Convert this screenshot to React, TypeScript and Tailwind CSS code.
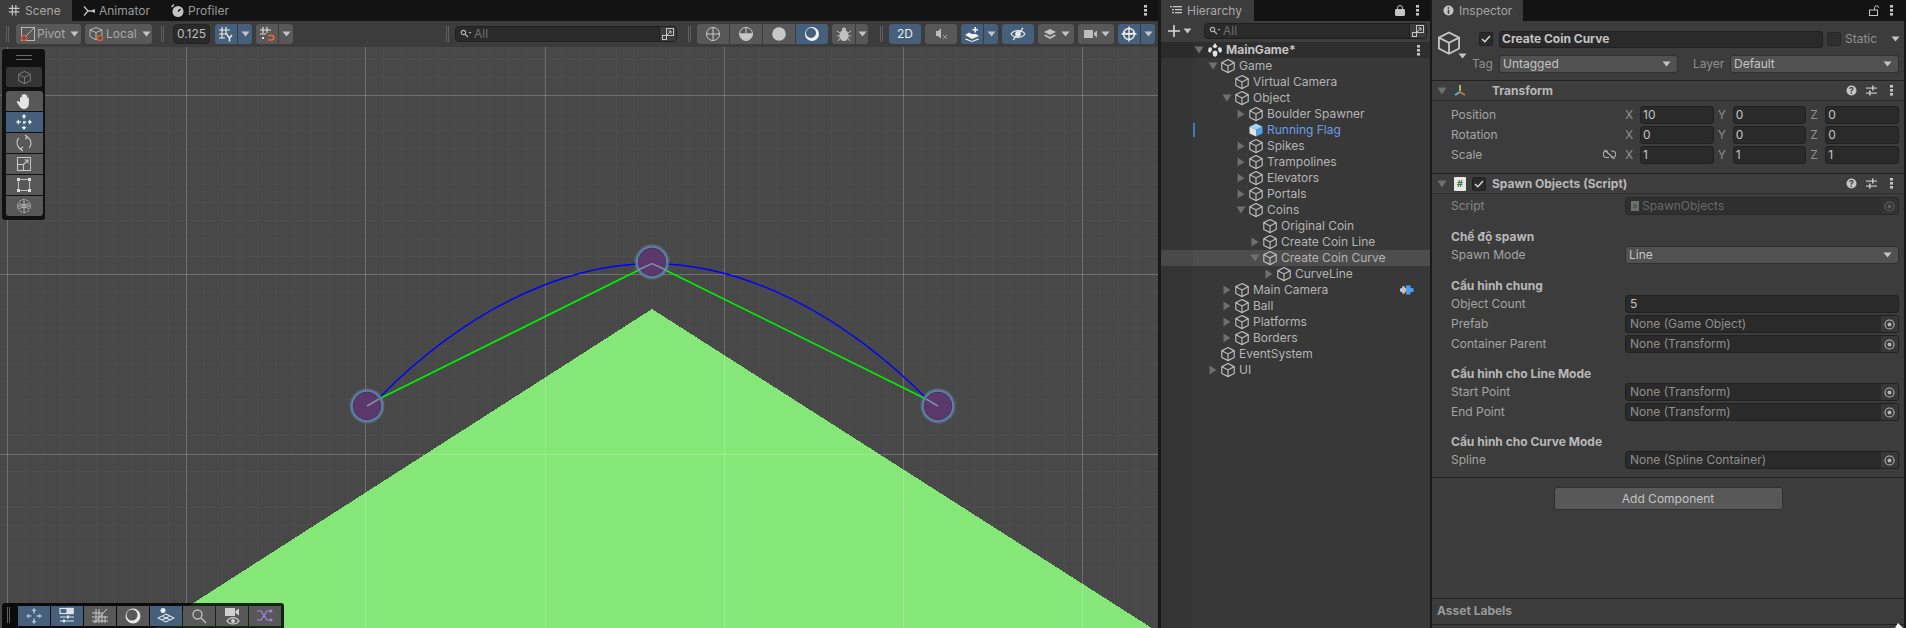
import React from "react";

const S = (p: React.SVGProps<SVGSVGElement> & { s?: number }) => {
  const { s = 16, children, ...r } = p;
  return (
    <svg width={s} height={s} viewBox="0 0 16 16" fill="none" stroke="currentColor" strokeWidth={1} className="shrink-0" {...r}>
      {children}
    </svg>
  );
};

const Cube = ({ c = "#c4c4c4", s = 16 }: { c?: string; s?: number }) => (
  <svg width={s} height={s} viewBox="0 0 16 16" fill="none" stroke={c} strokeWidth={1.1} className="shrink-0">
    <path d="M8 1.5 14.2 4.7V11.4L8 14.6 1.8 11.4V4.7Z" />
    <path d="M1.8 4.7 8 7.9 14.2 4.7M8 7.9V14.6" />
  </svg>
);

const Caret = ({ c = "#c4c4c4" }: { c?: string }) => (
  <svg width="9" height="6" viewBox="0 0 9 6" className="shrink-0"><path d="M0.5 0.5H8.5L4.5 5.5Z" fill={c} /></svg>
);

const Kebab = ({ c = "#c4c4c4" }: { c?: string }) => (
  <svg width="3" height="11" viewBox="0 0 3 11" className="shrink-0"><g fill={c}><rect x="0" y="0" width="3" height="2.6" /><rect x="0" y="4" width="3" height="2.6" /><rect x="0" y="8" width="3" height="2.6" /></g></svg>
);

const Grip = () => (
  <div className="flex gap-px h-[16px] shrink-0">
    <div className="w-px bg-[#5e5e5e]" />
    <div className="w-px bg-[#5e5e5e]" />
  </div>
);

const GridIcon = () => (
  <S s={14}><path d="M5 1V13M9 1V13M1 5H13M1 9H13" stroke="#c8c8c8" strokeWidth={1.3} /></S>
);

const Btn = ({ w, active, children, className = "" }: { w: number; active?: boolean; children?: React.ReactNode; className?: string }) => (
  <div style={{ width: w }} className={`h-[20px] flex items-center justify-center shrink-0 ${active ? "bg-[#46607c]" : "bg-[#585858]"} ${className}`}>
    {children}
  </div>
);

const Split = ({ w, sw = 14, active, children, className = "" }: { w: number; sw?: number; active?: boolean; children?: React.ReactNode; className?: string }) => (
  <div className={`flex shrink-0 rounded-[3px] overflow-hidden gap-px bg-[#3c3c3c] ${className}`}>
    <Btn w={w} active={active}>{children}</Btn>
    <Btn w={sw} active={active}><Caret /></Btn>
  </div>
);

const SearchGlass = () => (
  <svg width="12" height="10" viewBox="0 0 12 10" className="shrink-0" fill="none" stroke="#b0b0b0" strokeWidth={1.2}>
    <circle cx="3.5" cy="3.5" r="2.2" />
    <path d="M5 5 8 8" />
    <path d="M8.5 3H11.5L10 4.8Z" fill="#b0b0b0" stroke="none" />
  </svg>
);

const SearchBtnIcon = () => (
  <svg width="14" height="14" viewBox="0 0 14 14" fill="none" stroke="#c4c4c4" strokeWidth={1}>
    <rect x="5.5" y="1.5" width="7" height="7" />
    <rect x="1.5" y="8.5" width="4" height="4" />
    <path d="M6 8 10 4M7.5 4H10V6.5" />
  </svg>
);

const Search = ({ w, h = 16 }: { w: number; h?: number }) => (
  <div style={{ width: w, height: h }} className="flex items-center bg-[#2a2a2a] border border-[#1f1f1f] rounded-[4px] shrink-0 overflow-hidden">
    <div className="flex-1 flex items-center pl-[4px] gap-[2px]">
      <SearchGlass />
      <span className="text-[#6f6f6f] text-[12px] leading-none">All</span>
    </div>
    <div className="w-[17px] h-full flex items-center justify-center bg-[#3c3c3c] border-l border-[#1f1f1f]"><SearchBtnIcon /></div>
  </div>
);

function Tabs({ children, right, rightGap = "pr-[11px]" }: { children: React.ReactNode; right: React.ReactNode; rightGap?: string }) {
  return (
    <div className={`h-[21px] bg-[#131313] flex items-stretch justify-between shrink-0 ${rightGap}`}>
      <div className="flex items-stretch">{children}</div>
      <div className="flex items-center gap-[11px]">{right}</div>
    </div>
  );
}

function SceneToolbar() {
  return (
    <div className="h-[26px] bg-[#3c3c3c] flex items-center shrink-0 pl-[6px] pb-[0px]">
      <Grip />
      <div className="ml-[7px] w-[65px] h-[20px] rounded-[3px] bg-[#585858] flex items-center pl-[4px] gap-[1px] text-[#a9a9a9]">
        <svg width="16" height="16" viewBox="0 0 16 16" fill="none" className="shrink-0">
          <rect x="1.5" y="1.5" width="13" height="13" stroke="#b8b8b8" />
          <path d="M4 12 14 2" stroke="#b8b8b8" />
          <circle cx="4" cy="12" r="2.6" stroke="#e8582a" strokeWidth={1.3} fill="#585858" />
        </svg>
        <span className="text-[12px]">Pivot</span>
        <span className="ml-[4px]"><Caret /></span>
      </div>
      <div className="ml-[4px] w-[67px] h-[20px] rounded-[3px] bg-[#585858] flex items-center pl-[4px] gap-[1px] text-[#a9a9a9]">
        <svg width="16" height="16" viewBox="0 0 16 16" fill="none" className="shrink-0">
          <path d="M7 1.5 13 4V9.5L7 14 1 10.5V4ZM1 4 7 6.5 13 4M7 6.5V14" stroke="#b8b8b8" />
          <circle cx="11" cy="12" r="2.6" stroke="#e8582a" strokeWidth={1.3} fill="#585858" />
        </svg>
        <span className="text-[12px]">Local</span>
        <span className="ml-[4px]"><Caret /></span>
      </div>
      <div className="ml-[9px]"><Grip /></div>
      <div className="ml-[9px] w-[37px] h-[20px] rounded-[4px] bg-[#2a2a2a] border border-[#232323] flex items-center justify-center text-[#bdbdbd] text-[12px]">0.125</div>
      <Split w={22} sw={14} active className="ml-[5px]">
        <svg width="16" height="16" viewBox="0 0 16 16" fill="none" stroke="#e8e8e8" strokeWidth={1.2}><path d="M4 1V12M8 1V9M1 4H12M1 8H10M1 12H7" /><path d="M9 9 11.5 12 14 9M11.5 12V15.5" strokeWidth={1.6} /></svg>
      </Split>
      <Split w={22} sw={14} className="ml-[4px]">
        <svg width="16" height="16" viewBox="0 0 16 16" fill="none" stroke="#e0e0e0" strokeWidth={1.2}><path d="M4 1V7M8 1V7M1 4H12M1 8H7" /><rect x="3" y="11" width="2" height="2" fill="#e0e0e0" stroke="none" /><path d="M9 9.5H12.5A2 2 0 0 1 12.5 14H9" stroke="#f26a2e" strokeWidth={1.6} /></svg>
      </Split>
      <div className="ml-[153px]"><Grip /></div>
      <div className="ml-[6px]"><Search w={222} /></div>
      <div className="ml-[11px]"><Grip /></div>
      <div className="ml-[6px] flex rounded-[3px] overflow-hidden gap-px">
        <Btn w={32}><svg width="16" height="16" viewBox="0 0 16 16" fill="none" stroke="#c8c8c8"><circle cx="8" cy="8" r="6.5" /><path d="M8 1.5V14.5M1.5 8H14.5" /></svg></Btn>
        <Btn w={32}><svg width="16" height="16" viewBox="0 0 16 16" fill="none" stroke="#c8c8c8"><circle cx="8" cy="8" r="6.5" /><path d="M8 1.5V8M1.5 8H14.5" /><path d="M2 8A6 6 0 0 0 14 8Z" fill="#c8c8c8" /></svg></Btn>
        <Btn w={32}><svg width="16" height="16" viewBox="0 0 16 16"><circle cx="8" cy="8" r="6.8" fill="#c8c8c8" /></svg></Btn>
        <Btn w={32} active><svg width="16" height="16" viewBox="0 0 16 16"><circle cx="8" cy="8" r="7" fill="#f0f0f0" /><circle cx="7" cy="7" r="5" fill="#46607c" /></svg></Btn>
      </div>
      <Split w={23} sw={12} className="ml-[4px]">
        <svg width="16" height="16" viewBox="0 0 16 16" fill="#c0c0c0"><ellipse cx="8" cy="9.5" rx="4.5" ry="5.5" /><circle cx="8" cy="3.5" r="2" /><path d="M1 5 4 7M15 5 12 7M1 10H4M15 10H12M2 15 4 12M14 15 12 12" stroke="#c0c0c0" /></svg>
      </Split>
      <div className="ml-[12px]"><Grip /></div>
      <Btn w={32} active className="ml-[6px] rounded-[3px]"><span className="text-[#eaeaea] text-[12px]">2D</span></Btn>
      <Btn w={32} className="ml-[4px] rounded-[3px]">
        <svg width="16" height="16" viewBox="0 0 16 16"><path d="M3 5H5L8 2.5V12.5L5 10H3Z" fill="#bdbdbd" /><path d="M10 9 14 13M14 9 10 13" stroke="#9a9a9a" /></svg>
      </Btn>
      <Split w={22} sw={14} active className="ml-[4px]">
        <svg width="16" height="16" viewBox="0 0 16 16" fill="#f0f0f0"><path d="M1 9 5 6.5 8 8 12 8 15 10 8 13Z" /><path d="M2 12.5 8 15 14 12.5 15 13.5 8 16 1 13.5Z" /><path d="M10.5 1H12V3H14V4.5H12V6.5H10.5V4.5H8.5V3H10.5Z" /></svg>
      </Split>
      <Btn w={32} active className="ml-[4px] rounded-[3px]">
        <svg width="16" height="16" viewBox="0 0 16 16" fill="none" stroke="#e8e8e8" strokeWidth={1.2}><path d="M1 8C4 3.5 12 3.5 15 8 12 12.5 4 12.5 1 8Z" /><circle cx="8" cy="8" r="2.3" fill="#e8e8e8" /><path d="M3 14 13 2" /></svg>
      </Btn>
      <div className="ml-[4px] w-[36px] h-[20px] rounded-[3px] bg-[#585858] flex items-center justify-center gap-[4px]">
        <svg width="14" height="14" viewBox="0 0 14 14" fill="#c4c4c4"><path d="M7 2 13 5 7 8 1 5Z" /><path d="M2.5 7.5 7 10 11.5 7.5 13 8.5 7 12 1 8.5Z" /></svg>
        <Caret />
      </div>
      <div className="ml-[4px] w-[36px] h-[20px] rounded-[3px] bg-[#585858] flex items-center justify-center gap-[3px]">
        <svg width="15" height="14" viewBox="0 0 15 14" fill="#bdbdbd"><rect x="1" y="3" width="9" height="8" /><path d="M11 6 14 3.5V10.5L11 8Z" /></svg>
        <Caret />
      </div>
      <Split w={22} sw={14} active className="ml-[4px]">
        <svg width="16" height="16" viewBox="0 0 16 16" fill="none" stroke="#f0f0f0" strokeWidth={1.4}><circle cx="8" cy="8" r="5.5" /><path d="M8 0.5V15.5M0.5 8H15.5" /><path d="M3 6.5C5 8 11 8 13 6.5" strokeWidth={1} /></svg>
      </Split>
    </div>
  );
}

const tools = [
  <svg key="h" width="18" height="18" viewBox="0 0 18 18" fill="#e4e4e4"><path d="M5 10V5.5a1 1 0 0 1 1.8 0V3a1 1 0 0 1 1.9 0V2.5a1 1 0 0 1 1.8 0V3.5a1 1 0 0 1 1.8 0V6a1 1 0 0 1 1.6 0V11c0 3.5-2 6-5 6-2.5 0-3.5-1.5-5-3.5L2 10.5a1 1 0 0 1 1.8-1Z" /></svg>,
  <svg key="m" width="18" height="18" viewBox="0 0 18 18" fill="none" stroke="#cfe0f0" strokeWidth={1.6}><path d="M9 3V15M3 9H15" strokeDasharray="3 2" /><path d="M9 1 11.5 4H6.5ZM9 17 6.5 14H11.5ZM1 9 4 6.5V11.5ZM17 9 14 11.5V6.5Z" fill="#e8f0f8" stroke="none" /></svg>,
  <svg key="r" width="18" height="18" viewBox="0 0 18 18" fill="none" stroke="#c4c4c4" strokeWidth={1.1}><path d="M11 2.5A7 7 0 0 1 14 14M7 15.5A7 7 0 0 1 4 4" /><path d="M10 1 13 3.5 10 5M8 13 5 15 8 17" /></svg>,
  <svg key="s" width="16" height="16" viewBox="0 0 16 16" fill="none" stroke="#c4c4c4" strokeWidth={1.1}><rect x="1.5" y="1.5" width="13" height="13" /><rect x="1.5" y="8.5" width="6" height="6" /><path d="M7 9 12 4M8.5 4H12V7.5" /></svg>,
  <svg key="t" width="16" height="16" viewBox="0 0 16 16" fill="none" stroke="#c4c4c4"><rect x="2.5" y="2.5" width="11" height="11" strokeDasharray="7 4" strokeDashoffset="9" /><g fill="#e0e0e0" stroke="none"><rect x="1" y="1" width="3" height="3" /><rect x="12" y="1" width="3" height="3" /><rect x="1" y="12" width="3" height="3" /><rect x="12" y="12" width="3" height="3" /></g></svg>,
  <svg key="a" width="18" height="18" viewBox="0 0 18 18" fill="none" stroke="#b4b4b4"><circle cx="9" cy="9" r="6.5" strokeDasharray="3 1" /><path d="M9 2V16M2 9H16M4 6.5C7 8 11 8 14 6.5M4 11.5C7 10 11 10 14 11.5" /></svg>,
];

function ToolPalette() {
  return (
    <div className="absolute left-[2px] top-[2px] w-[43px] h-[171px] bg-[#111111] rounded-[3px] flex flex-col items-center pt-[6px]">
      <div className="w-[16px] h-[5px] border-y border-[#6a6a6a] shrink-0" />
      <div className="mt-[7px] ml-px w-[36px] h-[20px] bg-[#353535] rounded-[2px] flex items-center justify-center shrink-0"><Cube c="#777777" s={15} /></div>
      <div className="mt-[4px] ml-px flex flex-col gap-px rounded-[3px] overflow-hidden">
        {tools.map((t, i) => (
          <div key={i} className={`w-[37px] h-[20px] flex items-center justify-center ${i === 1 ? "bg-[#46607c]" : "bg-[#585858]"}`}>{t}</div>
        ))}
      </div>
    </div>
  );
}

const overlays = [
  <svg key="1" width="18" height="18" viewBox="0 0 18 18" fill="none" stroke="#a9bccf" strokeWidth={1.6}><path d="M9 3.5V6.5M9 11.5V14.5M3.5 9H6.5M11.5 9H14.5" /><path d="M9 1 11.5 4H6.5ZM9 17 6.5 14H11.5ZM1 9 4 6.5V11.5ZM17 9 14 11.5V6.5Z" fill="#a9bccf" stroke="none" /></svg>,
  <svg key="2" width="18" height="18" viewBox="0 0 18 18" fill="none" stroke="#dce4ec" strokeWidth={1.2}><rect x="2" y="1.5" width="13" height="5" /><rect x="9" y="1.5" width="6" height="5" fill="#dce4ec" /><path d="M2 10H16M2 14H16" /><rect x="9" y="8.5" width="2" height="3" fill="#dce4ec" stroke="none" /><rect x="5" y="12.5" width="2" height="3" fill="#dce4ec" stroke="none" /></svg>,
  <svg key="3" width="18" height="18" viewBox="0 0 18 18" fill="none" stroke="#c8c8c8"><path d="M5 2V16M8 2V16M11 5V16M14 9V16M1 6H10M1 10H17M1 14H17M3 16 16 2" /></svg>,
  <svg key="4" width="16" height="16" viewBox="0 0 16 16"><circle cx="8" cy="8" r="7.5" fill="#e8e8e8" /><circle cx="7" cy="7" r="5.5" fill="#585858" /></svg>,
  <svg key="5" width="18" height="18" viewBox="0 0 18 18" fill="none" stroke="#e4ebf2"><circle cx="6" cy="3.5" r="2.5" fill="#e4ebf2" stroke="none" /><path d="M9 7 17 11 9 15 1 11ZM5 9 13 13M13 9 5 13" strokeWidth={1.1} /></svg>,
  <svg key="6" width="16" height="16" viewBox="0 0 16 16" fill="none" stroke="#bdbdbd" strokeWidth={1.4}><circle cx="6.5" cy="6.5" r="4.5" /><path d="M10 10 15 15" /></svg>,
  <svg key="7" width="18" height="18" viewBox="0 0 18 18"><rect x="2" y="1" width="10" height="8" fill="#d0d0d0" /><path d="M12.5 4 16 1.5V8.5L12.5 6Z" fill="#d0d0d0" /><path d="M4 14C7 9.5 13 9.5 16 14 13 18 7 18 4 14Z" fill="none" stroke="#d0d0d0" strokeWidth={1.2} /><circle cx="10" cy="14" r="2" fill="#d0d0d0" /></svg>,
  <svg key="8" width="18" height="18" viewBox="0 0 18 18" fill="none" stroke="#a68ce6" strokeWidth={1.2}><path d="M1 4H5L11 13H15M1 13H5L11 4H15" /><path d="M14 2 17 4 14 6ZM14 11 17 13 14 15Z" fill="#a68ce6" stroke="none" /></svg>,
];

function OverlayBar() {
  return (
    <div className="absolute left-[2px] bottom-0 w-[282px] h-[25px] bg-[#000000d9] rounded-t-[3px] flex items-start pt-[3px] pl-[5px]">
      <div className="mt-[1px]"><Grip /></div>
      <div className="ml-[8px] flex gap-px">
        {overlays.map((o, i) => (
          <div key={i} className={`w-[32px] h-[20px] flex items-center justify-center ${i === 0 || i === 1 || i === 4 ? "bg-[#46607c]" : "bg-[#585858]"}`}>{o}</div>
        ))}
      </div>
    </div>
  );
}

function Scene() {
  const vs = [7, 186, 365, 545, 724, 903, 1082];
  const hs = [95, 274, 454];
  const minorV = Array.from({ length: 65 }, (_, i) => 7 + i * 17.92);
  const minorH = Array.from({ length: 32 }, (_, i) => 5.5 + i * 17.92);
  const circle = (cx: number, cy: number) => (
    <g key={cx}>
      <circle cx={cx} cy={cy} r={17.5} fill="#6b8bb2" fillOpacity={0.45} />
      <circle cx={cx} cy={cy} r={16} fill="#5f80a8" />
      <circle cx={cx} cy={cy} r={14.2} fill="#3f3a58" />
      <circle cx={cx} cy={cy} r={13.4} fill="#5a386a" />
    </g>
  );
  return (
    <div className="relative flex-1 bg-[#484848] overflow-hidden">
      <svg width="1158" height="581" viewBox="0 47 1158 581" className="block">
        {minorV.map((x) => <line key={x} x1={x} x2={x} y1={47} y2={628} stroke="#ffffff" strokeOpacity={0.03} />)}
        {minorH.map((y) => <line key={y} x1={0} x2={1158} y1={y} y2={y} stroke="#ffffff" strokeOpacity={0.03} />)}
        <polygon points="652,309 1158,632 148,632" fill="#84e778" shapeRendering="crispEdges" />
        {vs.map((x) => <line key={x} x1={x + 0.5} x2={x + 0.5} y1={47} y2={628} stroke="#ffffff" strokeOpacity={0.2} />)}
        {hs.map((y) => <line key={y} x1={0} x2={1158} y1={y + 0.5} y2={y + 0.5} stroke="#ffffff" strokeOpacity={0.2} />)}
        <path d="M379 398 C 458 318 555 264 652 263.5 C 749 264 846 318 926 398" fill="none" stroke="#0000ff" strokeWidth={1.4} />
        <path d="M379 399 L652 263.5 926 399" fill="none" stroke="#00f000" strokeWidth={1.7} />
        {circle(367, 406)}
        {circle(652, 262)}
        {circle(938, 406)}
        <path d="M367 406 379 399" stroke="#7f8fa8" strokeWidth={1.5} />
        <path d="M938 406 926 399" stroke="#7f8fa8" strokeWidth={1.5} />
        <path d="M638 270 L652 263.5 666 270" fill="none" stroke="#7f8fa8" strokeWidth={1.5} />
      </svg>
      <ToolPalette />
      <OverlayBar />
    </div>
  );
}

type Node = { t: string; d: number; a?: "r" | "d"; sel?: boolean; c?: boolean; extra?: boolean };
const nodes: Node[] = [
  { t: "Game", d: 0, a: "d" },
  { t: "Virtual Camera", d: 1 },
  { t: "Object", d: 1, a: "d" },
  { t: "Boulder Spawner", d: 2, a: "r" },
  { t: "Running Flag", d: 2, c: true },
  { t: "Spikes", d: 2, a: "r" },
  { t: "Trampolines", d: 2, a: "r" },
  { t: "Elevators", d: 2, a: "r" },
  { t: "Portals", d: 2, a: "r" },
  { t: "Coins", d: 2, a: "d" },
  { t: "Original Coin", d: 3 },
  { t: "Create Coin Line", d: 3, a: "r" },
  { t: "Create Coin Curve", d: 3, a: "d", sel: true },
  { t: "CurveLine", d: 4, a: "r" },
  { t: "Main Camera", d: 1, a: "r", extra: true },
  { t: "Ball", d: 1, a: "r" },
  { t: "Platforms", d: 1, a: "r" },
  { t: "Borders", d: 1, a: "r" },
  { t: "EventSystem", d: 0 },
  { t: "UI", d: 0, a: "r" },
];

const Arrow = ({ a }: { a?: "r" | "d" }) => (
  <div className="w-[14px] h-[16px] flex items-center justify-center shrink-0">
    {a === "d" && <svg width="10" height="8" viewBox="0 0 10 8"><path d="M0.5 0.5H9.5L5 7.5Z" fill="#6f6f6f" /></svg>}
    {a === "r" && <svg width="8" height="10" viewBox="0 0 8 10"><path d="M0.5 0.5V9.5L7.5 5Z" fill="#6f6f6f" /></svg>}
  </div>
);

function Row({ n }: { n: Node }) {
  return (
    <div style={{ paddingLeft: 45 + n.d * 14 }} className={`h-[16px] flex items-center relative ${n.sel ? "bg-[#4d4d4d]" : ""}`}>
      <Arrow a={n.a} />
      {n.c ? (
        <svg width="16" height="16" viewBox="0 0 16 16" className="shrink-0">
          <path d="M8 1.5 14.5 4.7 8 8 1.5 4.7Z" fill="#9fd0f5" />
          <path d="M1.5 4.7 8 8V14.6L1.5 11.4Z" fill="#e4e4e4" />
          <path d="M14.5 4.7 8 8V14.6L14.5 11.4Z" fill="#4fa3e8" />
        </svg>
      ) : (
        <Cube />
      )}
      <span className={`ml-[3px] text-[12px] whitespace-nowrap leading-none ${n.c ? "text-[#6c9ee0]" : "text-[#b4b4b4]"}`}>{n.t}</span>
      {n.extra && (
        <div className="absolute left-[238px] top-[3px]">
          <svg width="15" height="10" viewBox="0 0 15 10">
            <path d="M1 3.5 3 3 3.5 1.2H5.5L6 3 8 3.5V6.5L6 7 5.5 8.8H3.5L3 7 1 6.5Z" fill="#c4c4c4" />
            <path d="M7 0.5H11.5V3H14.5V7H11.5V9.5H7Z" fill="#4d9ef0" />
          </svg>
        </div>
      )}
    </div>
  );
}

function Hierarchy() {
  return (
    <div className="w-[269px] flex flex-col shrink-0 h-full bg-[#383838]">
      <Tabs
        rightGap="pr-[11px]"
        right={
          <>
            <svg width="10" height="11" viewBox="0 0 10 11"><rect x="0.5" y="4.5" width="9" height="6" rx="0.5" fill="#c4c4c4" stroke="#c4c4c4" /><path d="M2.5 4.5V3A2.5 2.5 0 0 1 7.5 3V4.5" fill="none" stroke="#c4c4c4" /></svg>
            <Kebab />
          </>
        }
      >
        <div className="w-[93px] bg-[#3c3c3c] flex items-center pl-[9px] gap-[5px]">
          <svg width="12" height="10" viewBox="0 0 12 10" fill="#c4c4c4"><rect x="0" y="0" width="2" height="1.3" /><rect x="3" y="0" width="9" height="1.3" /><rect x="2" y="3" width="2" height="1.3" /><rect x="5" y="3" width="7" height="1.3" /><rect x="2" y="6" width="2" height="1.3" /><rect x="5" y="6" width="7" height="1.3" /></svg>
          <span className="text-[12px] text-[#a9a9a9]">Hierarchy</span>
        </div>
      </Tabs>
      <div className="h-[21px] bg-[#3c3c3c] flex items-center shrink-0 pl-[7px] pb-px">
        <svg width="12" height="12" viewBox="0 0 12 12"><path d="M6 0V12M0 6H12" stroke="#d8d8d8" strokeWidth={1.6} /></svg>
        <span className="ml-[3px]"><Caret /></span>
        <div className="ml-[12px]"><Search w={223} /></div>
      </div>
      <div className="flex-1 relative">
        <div className="h-[16px] bg-[#2e2e2e] flex items-center pl-[31px] pr-[10px] relative">
          <Arrow a="d" />
          <div className="ml-px">
            <svg width="16" height="16" viewBox="0 0 16 16" className="shrink-0" fill="#e4e4e4">
              <path d="M8 1 10.5 4.8 8 6.3 5.5 4.8Z" />
              <path d="M1.8 5.5 4.8 5.6 4.8 8.6 2.8 11 1 9Z" />
              <path d="M14.2 5.5 11.2 5.6 11.2 8.6 13.2 11 15 9Z" />
              <path d="M5.5 9.8 8 8.4 10.5 9.8 10 13.5 8 15 6 13.5Z" />
            </svg>
          </div>
          <span className="ml-[3px] text-[12px] font-bold text-[#c4c4c4] leading-none">MainGame*</span>
          <div className="ml-auto"><Kebab /></div>
        </div>
        {nodes.map((n) => <Row key={n.t} n={n} />)}
        <div className="absolute left-0 top-0 bottom-0 w-[32px] bg-[#0000000d]" />
        <div className="absolute left-[32px] top-[81px] w-[2px] h-[14px] bg-[#3a7ec4]" />
      </div>
    </div>
  );
}

const Input = ({ v, flex = true, pl = "pl-[2px]" }: { v: string; flex?: boolean; pl?: string }) => (
  <div className={`h-[18px] bg-[#2a2a2a] border border-[#212121] rounded-[3px] flex items-center ${pl} text-[12px] text-[#c4c4c4] leading-none ${flex ? "flex-1" : ""}`}>{v}</div>
);

const Picker = () => (
  <svg width="11" height="11" viewBox="0 0 11 11" fill="none"><circle cx="5.5" cy="5.5" r="4.5" stroke="#b4b4b4" strokeWidth={1.1} /><circle cx="5.5" cy="5.5" r="2" fill="#b4b4b4" /></svg>
);

const Label = ({ t }: { t: string }) => <span className="text-[12px] text-[#a4a4a4] leading-none whitespace-nowrap">{t}</span>;

const ObjField = ({ v, dim, icon }: { v: string; dim?: boolean; icon?: boolean }) => (
  <div className="w-[274px] h-[18px] bg-[#2a2a2a] border border-[#212121] rounded-[3px] flex items-center text-[12px] leading-none overflow-hidden">
    <div className={`flex-1 flex items-center pl-[4px] gap-[1px] ${dim ? "text-[#7b7b7b]" : "text-[#8f8f8f]"}`}>
      {icon && <svg width="10" height="12" viewBox="0 0 10 12"><rect x="1" y="1" width="8" height="10" fill="#858585" /><rect x="3" y="4" width="4" height="4" fill="#5c6f5c" /></svg>}
      <span className={icon ? "ml-[1px]" : ""}>{v}</span>
    </div>
    <div className={`w-[17px] h-full flex items-center justify-center bg-[#383838] ${dim ? "opacity-50" : ""}`}><Picker /></div>
  </div>
);

const FieldRow = ({ l, children, dim }: { l: string; children: React.ReactNode; dim?: boolean }) => (
  <div className={`h-[20px] flex items-center justify-between pl-[19px] pr-[5px] ${dim ? "opacity-70" : ""}`}>
    <Label t={l} />
    {children}
  </div>
);

const Heading = ({ t, mt = "mt-[12px]" }: { t: string; mt?: string }) => (
  <div className={`h-[16px] pl-[19px] flex items-center text-[12px] font-bold text-[#b8b8b8] leading-none ${mt}`}>{t}</div>
);

const Dropdown = ({ v, w }: { v: string; w: string }) => (
  <div className={`${w} h-[18px] bg-[#515151] border border-[#303030] rounded-[3px] flex items-center justify-between pl-[3px] pr-[6px] text-[12px] text-[#c4c4c4] leading-none`}>
    <span>{v}</span>
    <Caret />
  </div>
);

const HeaderTools = () => (
  <div className="ml-auto flex items-center gap-[9px] pr-[11px]">
    <svg width="11" height="11" viewBox="0 0 11 11"><circle cx="5.5" cy="5.5" r="5" fill="#c4c4c4" /><text x="5.5" y="8.6" textAnchor="middle" fontSize="8.5" fontWeight="700" fontFamily="Inter" fill="#3e3e3e">?</text></svg>
    <svg width="11" height="11" viewBox="0 0 11 11" fill="#c4c4c4"><rect x="0" y="2.5" width="11" height="1.2" /><rect x="6" y="0.5" width="1.6" height="5" /><rect x="0" y="7.5" width="11" height="1.2" /><rect x="3" y="5.5" width="1.6" height="5" /></svg>
    <div className="ml-[4px]"><Kebab /></div>
  </div>
);

const Check = () => (
  <div className="w-[14px] h-[14px] bg-[#2a2a2a] border border-[#212121] rounded-[2px] flex items-center justify-center shrink-0">
    <svg width="10" height="8" viewBox="0 0 10 8" fill="none"><path d="M1 4 3.8 6.8 9 1" stroke="#dcdcdc" strokeWidth={1.4} /></svg>
  </div>
);

const Vec = ({ l, x, y, z, link }: { l: string; x: string; y: string; z: string; link?: boolean }) => (
  <div className="h-[20px] flex items-center pl-[19px] pr-[5px] relative">
    <Label t={l} />
    {link && (
      <div className="absolute left-[171px] top-[4px]">
        <svg width="13" height="11" viewBox="0 0 13 11" fill="none" stroke="#b4b4b4" strokeWidth={1.1}><path d="M5 2H3.5A3 3 0 0 0 3.5 8.5H6M8 2H9.5A3 3 0 0 1 9.5 8.5H8M1.5 1 11.5 10" /></svg>
      </div>
    )}
    <div className="ml-auto w-[274px] flex items-center gap-[4px]">
      {[["X", x], ["Y", y], ["Z", z]].map(([a, b]) => (
        <div key={a} className="flex-1 flex items-center">
          <span className="w-[15px] text-[12px] text-[#8f8f8f] leading-none shrink-0">{a}</span>
          <Input v={b} />
        </div>
      ))}
    </div>
  </div>
);

function Inspector() {
  return (
    <div className="ml-[2px] w-[474px] flex flex-col h-full shrink-0 relative">
      <Tabs
        rightGap="pr-[13px]"
        right={
          <>
            <svg width="10" height="11" viewBox="0 0 10 11"><rect x="0.5" y="5" width="8" height="5.5" fill="none" stroke="#c4c4c4" /><path d="M5.5 5V2.8A2 2 0 0 1 9.5 2.8" fill="none" stroke="#c4c4c4" /></svg>
            <Kebab />
          </>
        }
      >
        <div className="w-[91px] bg-[#3c3c3c] flex items-center pl-[11px] gap-[5px]">
          <svg width="11" height="11" viewBox="0 0 11 11"><circle cx="5.5" cy="5.5" r="5" fill="#c4c4c4" /><rect x="4.7" y="4.6" width="1.6" height="4.2" fill="#3c3c3c" /><rect x="4.7" y="2.2" width="1.6" height="1.5" fill="#3c3c3c" /></svg>
          <span className="text-[12px] text-[#a4a4a4]">Inspector</span>
        </div>
      </Tabs>
      <div className="flex-1 flex flex-col bg-[#3c3c3c] mr-[2px] min-h-0">
        <div className="h-[60px] relative shrink-0 border-b border-[#212121]">
          <div className="absolute left-[4px] top-[9px]"><Cube c="#c8c8c8" s={26} /></div>
          <div className="absolute left-[26px] top-[32px]"><Caret /></div>
          <div className="flex items-center pt-[9px] pl-[47px] h-[27px]">
            <Check />
            <div className="ml-[6px] w-[324px] h-[17px] bg-[#2a2a2a] border border-[#212121] rounded-[3px] flex items-center pl-[2px] text-[12px] font-bold text-[#c4c4c4] leading-none">Create Coin Curve</div>
            <div className="ml-[4px] w-[14px] h-[14px] bg-[#2f2f2f] border border-[#272727] rounded-[2px]" />
            <span className="ml-[4px] text-[12px] text-[#8f8f8f] leading-none">Static</span>
            <span className="ml-[14px]"><Caret /></span>
          </div>
          <div className="flex items-center mt-[7px] pl-[40px]">
            <span className="w-[27px] text-[12px] text-[#8f8f8f] leading-none">Tag</span>
            <Dropdown v="Untagged" w="w-[179px]" />
            <span className="ml-[15px] w-[37px] text-[12px] text-[#8f8f8f] leading-none">Layer</span>
            <Dropdown v="Default" w="w-[169px]" />
          </div>
        </div>
        <div className="h-[20px] bg-[#3e3e3e] flex items-center shrink-0 border-b border-[#303030] pl-[5px]">
          <svg width="10" height="8" viewBox="0 0 10 8"><path d="M0.5 0.5H9.5L5 7.5Z" fill="#6f6f6f" /></svg>
          <div className="ml-[6px] w-[14px] h-[14px]">
            <svg width="14" height="14" viewBox="0 0 14 14" fill="none" strokeWidth={1.8}><path d="M7 1V7" stroke="#a4d84a" /><path d="M7 8 2 11" stroke="#5cb8e8" /><path d="M7 8 12 11" stroke="#e8663a" /></svg>
          </div>
          <span className="ml-[25px] text-[12px] font-bold text-[#b8b8b8] leading-none">Transform</span>
          <HeaderTools />
        </div>
        <div className="pt-[4px] pb-[8px] border-b border-[#212121] shrink-0">
          <Vec l="Position" x="10" y="0" z="0" />
          <Vec l="Rotation" x="0" y="0" z="0" />
          <Vec l="Scale" x="1" y="1" z="1" link />
        </div>
        <div className="h-[20px] bg-[#3e3e3e] flex items-center shrink-0 border-b border-[#303030] pl-[5px]">
          <svg width="10" height="8" viewBox="0 0 10 8"><path d="M0.5 0.5H9.5L5 7.5Z" fill="#6f6f6f" /></svg>
          <div className="ml-[7px] w-[12px] h-[14px] bg-[#e8e8e8] rounded-[1px] flex items-center justify-center text-[9px] font-bold text-[#2f7a3a] leading-none">#</div>
          <div className="ml-[6px]"><Check /></div>
          <span className="ml-[6px] text-[12px] font-bold text-[#b8b8b8] leading-none">Spawn Objects (Script)</span>
          <HeaderTools />
        </div>
        <div className="pt-[2px] pb-[7px] border-b border-[#212121] shrink-0">
          <FieldRow l="Script" dim><ObjField v="SpawnObjects" dim icon /></FieldRow>
          <Heading t="Chế độ spawn" mt="mt-[13px]" />
          <FieldRow l="Spawn Mode"><Dropdown v="Line" w="w-[274px]" /></FieldRow>
          <Heading t="Cấu hình chung" mt="mt-[13px]" />
          <FieldRow l="Object Count"><div className="w-[274px] flex"><Input v="5" pl="pl-[4px]" /></div></FieldRow>
          <FieldRow l="Prefab"><ObjField v="None (Game Object)" /></FieldRow>
          <FieldRow l="Container Parent"><ObjField v="None (Transform)" /></FieldRow>
          <Heading t="Cấu hình cho Line Mode" />
          <FieldRow l="Start Point"><ObjField v="None (Transform)" /></FieldRow>
          <FieldRow l="End Point"><ObjField v="None (Transform)" /></FieldRow>
          <Heading t="Cấu hình cho Curve Mode" />
          <FieldRow l="Spline"><ObjField v="None (Spline Container)" /></FieldRow>
        </div>
        <div className="flex-1 flex justify-center items-start pt-[9px]">
          <div className="w-[229px] h-[23px] bg-[#585858] border border-[#303030] rounded-[3px] flex items-center justify-center text-[12px] text-[#c4c4c4] leading-none">Add Component</div>
        </div>
        <div className="h-[26px] border-t border-[#212121] bg-[#3c3c3c] pl-[5px] flex items-center pb-[1px] text-[12px] font-bold text-[#9a9a9a] leading-none shrink-0">Asset Labels</div>
        <div className="h-[4px] border-t border-[#212121] bg-[#3c3c3c] shrink-0" />
      </div>
      <svg width="8" height="5" viewBox="0 0 8 5" className="absolute left-[463px] bottom-0"><path d="M3 0 8 5H0Z" fill="#ffffff" /></svg>
    </div>
  );
}

export default function App() {
  return (
    <div className="w-[1906px] h-[628px] bg-[#191919] flex overflow-hidden font-['Inter',sans-serif]">
      <div className="w-[1158px] h-full flex flex-col shrink-0">
        <Tabs right={<Kebab />} rightGap="pr-[11px]">
          <div className="w-[72px] bg-[#3c3c3c] flex items-center pl-[8px] gap-[3px]">
            <GridIcon />
            <span className="text-[12px] text-[#a9a9a9]">Scene</span>
          </div>
          <div className="flex items-center pl-[11px] gap-[4px] w-[85px]">
            <svg width="12" height="12" viewBox="0 0 12 12" fill="none" stroke="#c4c4c4" strokeWidth={1.3}><path d="M1 1.5 5 6 1 10.5M5 6H11" /><circle cx="11" cy="6" r="1" fill="#c4c4c4" /></svg>
            <span className="text-[12px] text-[#9a9a9a]">Animator</span>
          </div>
          <div className="flex items-center pl-[14px] gap-[4px]">
            <svg width="13" height="13" viewBox="0 0 13 13"><circle cx="7" cy="7.5" r="5.5" fill="#c4c4c4" /><path d="M7 7.5 9.5 5" stroke="#131313" strokeWidth={1.4} /><path d="M0.5 3 3 0.5" stroke="#c4c4c4" strokeWidth={1.4} /></svg>
            <span className="text-[12px] text-[#9a9a9a]">Profiler</span>
          </div>
        </Tabs>
        <SceneToolbar />
        <Scene />
      </div>
      <div className="w-[3px] shrink-0" />
      <Hierarchy />
      <Inspector />
    </div>
  );
}
